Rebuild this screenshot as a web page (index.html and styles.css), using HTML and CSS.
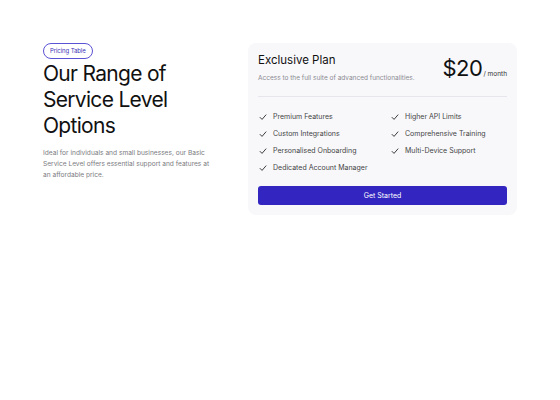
FILE: index.html
```html
<!DOCTYPE html>
<html>
<head>
<meta charset="utf-8">
<link rel="stylesheet" href="styles.css">
</head>
<body>
<main class="page">
  <section class="intro">
    <span class="badge">Pricing Table</span>
    <h1 class="title">Our Range of Service Level Options</h1>
    <p class="lead">Ideal for individuals and small businesses, our Basic Service Level offers essential support and features at an affordable price.</p>
  </section>
  <section class="card">
    <div class="card-head">
      <div>
        <h2 class="plan">Exclusive Plan</h2>
        <p class="plan-desc">Access to the full suite of advanced functionalities.</p>
      </div>
      <div class="price"><span class="amount">$20</span><span class="per">/ month</span></div>
    </div>
    <ul class="features">
      <li><svg class="check" viewBox="0 0 10 10"><path d="M1 5.2 L3.8 8 L9 2"/></svg>Premium Features</li>
      <li><svg class="check" viewBox="0 0 10 10"><path d="M1 5.2 L3.8 8 L9 2"/></svg>Higher API Limits</li>
      <li><svg class="check" viewBox="0 0 10 10"><path d="M1 5.2 L3.8 8 L9 2"/></svg>Custom Integrations</li>
      <li><svg class="check" viewBox="0 0 10 10"><path d="M1 5.2 L3.8 8 L9 2"/></svg>Comprehensive Training</li>
      <li><svg class="check" viewBox="0 0 10 10"><path d="M1 5.2 L3.8 8 L9 2"/></svg>Personalised Onboarding</li>
      <li><svg class="check" viewBox="0 0 10 10"><path d="M1 5.2 L3.8 8 L9 2"/></svg>Multi-Device Support</li>
      <li><svg class="check" viewBox="0 0 10 10"><path d="M1 5.2 L3.8 8 L9 2"/></svg>Dedicated Account Manager</li>
    </ul>
    <button class="cta">Get Started</button>
  </section>
</main>
</body>
</html>
```

FILE: styles.css
```css
* { box-sizing: border-box; }
body {
  margin: 0;
  background: #fff;
  font-family: Inter, "Noto Sans", sans-serif;
  color: #111;
}
.page {
  display: flex;
  align-items: flex-start;
  gap: 33px;
  padding: 43px 43px 0 43px;
}
.intro {
  width: 172px;
  flex: none;
  display: flex;
  flex-direction: column;
  align-items: flex-start;
}
.badge {
  display: block;
  border: 1px solid #5b52d6;
  color: #3a31b8;
  border-radius: 8px;
  font-size: 6px;
  line-height: 14px;
  padding: 0 6px;
  letter-spacing: -0.1px;
}
.title {
  margin: 2px 0 0;
  font-weight: 400;
  font-size: 21px;
  line-height: 26px;
  letter-spacing: -0.7px;
  color: #111;
}
.lead {
  margin: 9px 0 0;
  font-size: 6.6px;
  line-height: 11px;
  color: #7a7a80;
}
.card {
  width: 269px;
  flex: none;
  background: #f8f8fb;
  border-radius: 8px;
  padding: 10px 10px 10px;
}
.card-head {
  display: flex;
  justify-content: space-between;
  align-items: flex-start;
  padding-bottom: 13px;
  border-bottom: 1px solid #e6e6ec;
}
.plan {
  margin: 0;
  font-weight: 400;
  font-size: 11.5px;
  line-height: 14px;
  color: #111;
}
.plan-desc {
  margin: 7px 0 0;
  font-size: 6.5px;
  line-height: 9px;
  color: #8a8a90;
}
.price {
  display: flex;
  align-items: baseline;
  margin-top: 2px;
}
.amount {
  font-size: 22px;
  line-height: 26px;
  letter-spacing: -0.5px;
  color: #111;
}
.per {
  font-size: 6.5px;
  color: #333;
  margin-left: 1px;
}
.features {
  list-style: none;
  margin: 0;
  padding: 15px 0 0 1px;
  display: grid;
  grid-template-columns: 132px 1fr;
  row-gap: 8px;
}
.features li {
  display: flex;
  align-items: center;
  gap: 6px;
  font-size: 7px;
  line-height: 9px;
  color: #444;
}
.check {
  width: 8px;
  height: 8px;
  fill: none;
  stroke: #222;
  stroke-width: 1.1;
}
.cta {
  display: block;
  width: 100%;
  margin-top: 14px;
  height: 19px;
  border: 0;
  border-radius: 3px;
  background: #3326c0;
  color: #fff;
  font-family: inherit;
  font-size: 7px;
}
```
